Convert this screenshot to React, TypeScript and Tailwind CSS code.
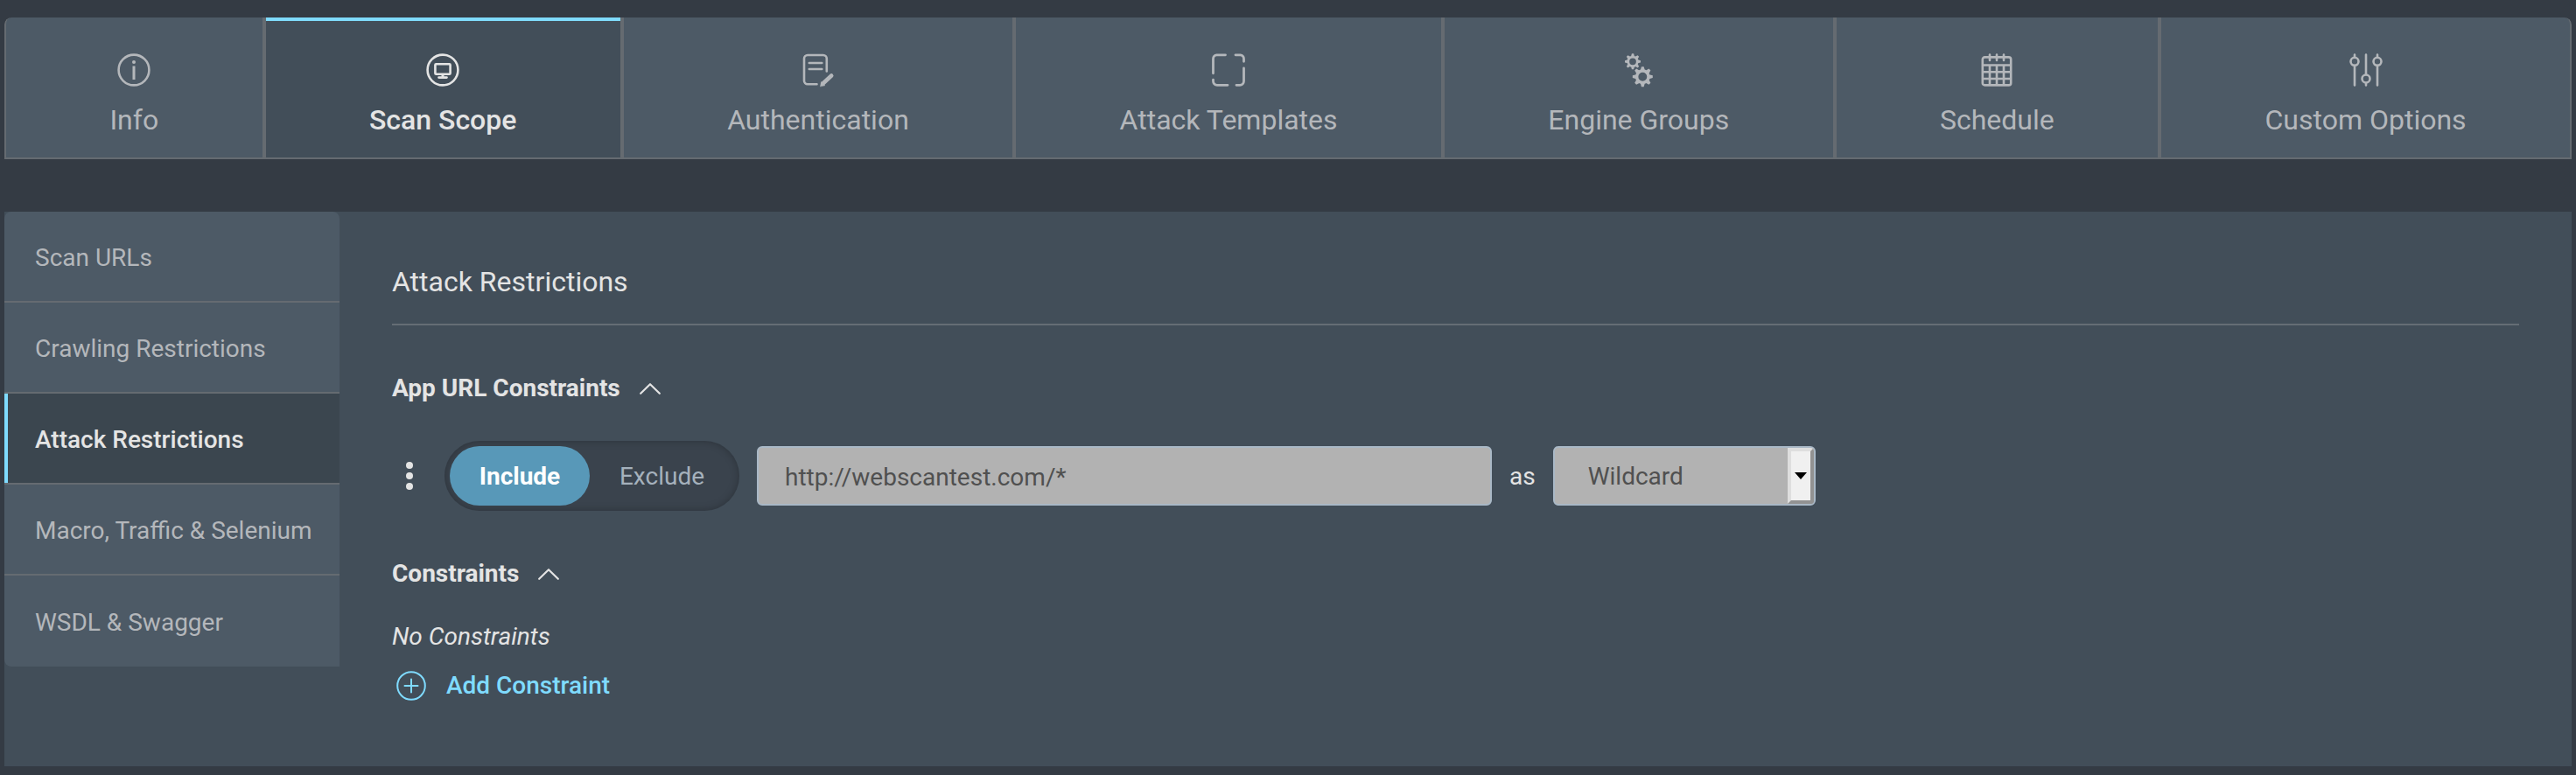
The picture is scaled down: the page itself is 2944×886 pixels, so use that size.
import { useState, type ReactNode } from "react";

function InfoIcon() {
  return (
    <svg viewBox="0 0 40 40" className="h-10 w-10" fill="none" stroke="currentColor" strokeWidth="2.6" aria-hidden="true">
      <circle cx="20" cy="20" r="17.4" />
      <path d="M20 15.5V31" strokeWidth="3" />
      <circle cx="20" cy="11" r="2" fill="currentColor" stroke="none" />
    </svg>
  );
}

function ScopeIcon() {
  return (
    <svg viewBox="0 0 40 40" className="h-10 w-10" fill="none" stroke="currentColor" strokeWidth="2.6" aria-hidden="true">
      <circle cx="20" cy="20" r="17.4" />
      <rect x="11.4" y="13.2" width="17.2" height="11.6" rx="1" />
      <path d="M20 25v4" strokeWidth="3" />
      <path d="M15.5 28.6h9" strokeLinecap="round" />
    </svg>
  );
}

function AuthIcon() {
  return (
    <svg viewBox="0 0 40 40" className="h-10 w-10" fill="none" stroke="currentColor" strokeWidth="2.6" strokeLinecap="round" aria-hidden="true">
      <path d="M18.5 36.2H8A4 4 0 0 1 4 32.2V7a4 4 0 0 1 4-4h17.800a4 4 0 0 1 4 4v14.500" />
      <path d="M9.800 12h14.500M9.800 19h14.500" />
      <path d="M25.500 35.500L35.200 26.500" strokeWidth="4.6" />
      <path d="M22.600 38.600l1-5 4 3.800z" fill="currentColor" strokeWidth="0.6" />
    </svg>
  );
}

function TemplateIcon() {
  return (
    <svg viewBox="0 0 40 40" className="h-10 w-10" fill="none" stroke="currentColor" strokeWidth="2.8" strokeLinecap="round" aria-hidden="true">
      <path d="M16.500 2.800H6.500A4.500 4.500 0 0 0 2.500 7.300v16.500" />
      <path d="M28 2.800h5.500A4.500 4.500 0 0 1 37.500 7.300v3" />
      <path d="M37.500 18v14.800a4.500 4.500 0 0 1-4.500 4.500h-4" />
      <path d="M2.500 31.200v1.500A4.500 4.500 0 0 0 7 37.300h12" />
    </svg>
  );
}

function Gear({ x, y, r }: { x: number; y: number; r: number }) {
  return (
    <g transform={`translate(${x} ${y}) scale(${r})`}>
      <circle r="0.58" fill="none" strokeWidth="0.3" stroke="currentColor" />
      {[0, 45, 90, 135, 180, 225, 270, 315].map((a) => (
        <path key={a} d="M-.22-.64L-.12-1H.12L.22-.64z" fill="currentColor" transform={`rotate(${a})`} />
      ))}
    </g>
  );
}

function GearsIcon() {
  return (
    <svg viewBox="0 0 40 40" className="h-10 w-10" aria-hidden="true">
      <Gear x={13} y={10.3} r={9} />
      <Gear x={24.3} y={27.7} r={11.5} />
    </svg>
  );
}

function CalendarIcon() {
  return (
    <svg viewBox="0 0 40 40" className="h-10 w-10" fill="none" stroke="currentColor" strokeWidth="2.6" aria-hidden="true">
      <rect x="3.8" y="5.4" width="32.4" height="32" rx="2.5" />
      <path d="M12 2.500v6.500M20 2.500v6.500M28 2.500v6.500" strokeLinecap="round" />
      <path d="M4 14.500h32M4 22.300h32M4 30h32M12 14.500v23M20 14.500v23M28 14.500v23" />
    </svg>
  );
}

function SlidersIcon() {
  return (
    <svg viewBox="0 0 40 40" className="h-10 w-10" fill="none" stroke="currentColor" strokeWidth="2.6" strokeLinecap="round" aria-hidden="true">
      <path d="M7 2.500v3M7 15v22.500M20 2.500V25M20 35v2.500M33 2.500v3M33 15v22.500" />
      <circle cx="7" cy="10.3" r="4.5" />
      <circle cx="20" cy="30" r="4.5" />
      <circle cx="33" cy="10.3" r="4.5" />
    </svg>
  );
}

const tabs: { label: string; icon: ReactNode }[] = [
  { label: "Info", icon: <InfoIcon /> },
  { label: "Scan Scope", icon: <ScopeIcon /> },
  { label: "Authentication", icon: <AuthIcon /> },
  { label: "Attack Templates", icon: <TemplateIcon /> },
  { label: "Engine Groups", icon: <GearsIcon /> },
  { label: "Schedule", icon: <CalendarIcon /> },
  { label: "Custom Options", icon: <SlidersIcon /> },
];

const sections = [
  "Scan URLs",
  "Crawling Restrictions",
  "Attack Restrictions",
  "Macro, Traffic & Selenium",
  "WSDL & Swagger",
];

function SectionToggle({ label, open, onToggle }: { label: string; open: boolean; onToggle: () => void }) {
  return (
    <h3>
      <button type="button" aria-expanded={open} onClick={onToggle} className="flex items-center gap-[22px] font-bold leading-8">
        {label}
        <svg
          viewBox="0 0 24 14"
          className={open ? "h-3.5 w-6" : "h-3.5 w-6 rotate-180"}
          fill="none"
          stroke="currentColor"
          strokeWidth="2.2"
          strokeLinecap="round"
          strokeLinejoin="round"
          aria-hidden="true"
        >
          <path d="M1.200 12.800L12 2.200l10.800 10.600" />
        </svg>
      </button>
    </h3>
  );
}

export default function App() {
  const [tab, setTab] = useState("Scan Scope");
  const [section, setSection] = useState("Attack Restrictions");
  const [mode, setMode] = useState("Include");
  const [url, setUrl] = useState("http://webscantest.com/*");
  const [urlOpen, setUrlOpen] = useState(true);
  const [listOpen, setListOpen] = useState(true);

  return (
    <div className="flex min-h-screen flex-col bg-[#343b44] px-[5px] pt-5 pb-2.5 font-['Roboto',sans-serif] text-[28px] leading-8 text-[#e4e4e4]">
      <nav className="flex overflow-hidden rounded-t-lg">
        {tabs.map((t, i) => (
          <button
            key={t.label}
            type="button"
            aria-current={t.label === tab ? "page" : undefined}
            onClick={() => setTab(t.label)}
            className={
              "relative flex h-[162px] flex-auto flex-col items-center border-x-2 border-b-2 border-[#656b71] pt-10 text-[32px] " +
              (i === 0 ? "rounded-tl-lg " : i === tabs.length - 1 ? "rounded-tr-lg " : "") +
              (t.label === tab ? "bg-[#424e59] font-medium text-[#e4e4e4]" : "bg-[#4d5a66] text-[#b4b7bb]")
            }
          >
            {t.label === tab && <span className="absolute inset-x-0 top-0 h-1 bg-[#7fdbff]" />}
            {t.icon}
            <span className="mt-[17px] leading-10">{t.label}</span>
          </button>
        ))}
      </nav>

      <div className="mt-15 flex flex-1 items-stretch bg-[#424e59]">
        <nav className="flex w-[383px] shrink-0 flex-col self-start overflow-hidden rounded-l-lg rounded-tr-lg">
          {sections.map((s, i) => (
            <button
              key={s}
              type="button"
              aria-current={s === section ? "page" : undefined}
              onClick={() => setSection(s)}
              className={
                "relative h-[104px] whitespace-nowrap pt-1 pl-[35px] text-left " +
                (i < sections.length - 1 ? "border-b-2 border-[#656b71] " : "") +
                (s === section ? "bg-[#3b464f] font-medium text-[#e4e4e4]" : "bg-[#4d5a66] text-[#b4b7bb]")
              }
            >
              {s === section && <span className="absolute inset-y-0 left-0 w-1 bg-[#7fdbff]" />}
              {s}
            </button>
          ))}
        </nav>

        <main className="min-w-0 flex-1 px-15 pt-15">
          <h2 className="border-b-2 border-[#656d75] pb-7 text-[32px] leading-10">Attack Restrictions</h2>

          <div className="mt-14">
            <SectionToggle label="App URL Constraints" open={urlOpen} onToggle={() => setUrlOpen(!urlOpen)} />
          </div>
          {urlOpen && (
            <div className="mt-11 flex items-center">
              <button type="button" aria-label="More actions" className="flex w-10 justify-center">
                <svg viewBox="0 0 8 32" className="h-8 w-2" fill="currentColor" aria-hidden="true">
                  <circle cx="4" cy="4" r="4" />
                  <circle cx="4" cy="16" r="4" />
                  <circle cx="4" cy="28" r="4" />
                </svg>
              </button>
              <div className="ml-5 flex h-20 w-[337px] rounded-full bg-[#3a434d] p-1.5 shadow-[inset_0_0_10px_rgba(0,0,0,0.25)]">
                {["Include", "Exclude"].map((m) => (
                  <button
                    key={m}
                    type="button"
                    aria-pressed={m === mode}
                    onClick={() => setMode(m)}
                    className={
                      "rounded-full pt-0.5 " +
                      (m === mode ? "w-40 bg-[#5898b8] font-bold text-white" : "flex-1 text-[#a5b1bc]")
                    }
                  >
                    {m}
                  </button>
                ))}
              </div>
              <input
                type="text"
                aria-label="URL"
                value={url}
                onChange={(e) => setUrl(e.target.value)}
                className="ml-5 h-[68px] w-[840px] rounded-md border-2 border-[#a9b8c6] bg-[#b2b2b2] px-[30px] pt-0.5 text-[#505050] outline-none"
              />
              <label htmlFor="match-type" className="mx-5 pt-0.5">
                as
              </label>
              <div className="relative">
                <select
                  id="match-type"
                  className="h-[68px] w-[300px] appearance-none rounded-md border-2 border-[#a9b8c6] bg-[#b2b2b2] pt-0.5 pl-[38px] text-[#505050] outline-none"
                >
                  <option>Wildcard</option>
                  <option>Regex</option>
                  <option>Literal</option>
                </select>
                <span className="pointer-events-none absolute inset-y-0.5 right-0.5 flex w-[30px] items-center justify-center rounded-r-sm border-4 border-t-[#dedede] border-r-[#929292] border-b-[#929292] border-l-[#dedede] bg-[#f0f0f0]">
                  <svg viewBox="0 0 14 8" className="h-2 w-3.5" aria-hidden="true">
                    <path d="M0 0h14L7 8z" fill="#000" />
                  </svg>
                </span>
              </div>
            </div>
          )}

          <div className="mt-14">
            <SectionToggle label="Constraints" open={listOpen} onToggle={() => setListOpen(!listOpen)} />
          </div>
          {listOpen && (
            <div className="mt-10">
              <p className="italic">No Constraints</p>
              <button type="button" className="mt-5 flex items-center gap-[22px] pl-1 font-medium leading-10 text-[#7fdbff]">
                <svg viewBox="0 0 36 36" className="h-9 w-9" fill="none" stroke="currentColor" strokeWidth="2" strokeLinecap="round" aria-hidden="true">
                  <circle cx="18" cy="18" r="15.8" />
                  <path d="M10.500 18h15M18 10.500v15" />
                </svg>
                Add Constraint
              </button>
            </div>
          )}
        </main>
      </div>
    </div>
  );
}
